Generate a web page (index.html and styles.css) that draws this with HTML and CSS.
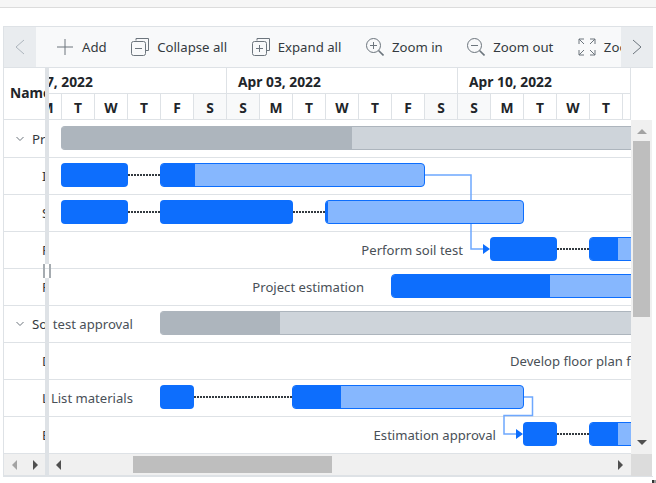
FILE: index.html
```html
<!DOCTYPE html>
<html>

<head>
    <meta charset="UTF-8">
    <meta name="viewport" content="width=device-width, initial-scale=1.0">
    <title>Gantt Chart</title>
    <link rel="stylesheet" href="styles.css">
</head>

<body>
    <div class="pageTop"></div>

    <div class="gantt">
        <div class="toolbar">
            <button class="navBtn">
                <svg width="12" height="16" viewBox="0 0 12 16"><path d="M10 1 2 8l8 7" class="navIcon" /></svg>
            </button>
            <div class="toolItems">
                <div class="toolItem">
                    <svg width="18" height="18" viewBox="0 0 18 18"><path d="M9 1v16M1 9h16" class="toolIcon" /></svg>
                    <span>Add</span>
                </div>
                <div class="toolItem">
                    <svg width="18" height="18" viewBox="0 0 18 18"><path d="M5 2.5V.5h12.5v12H15" class="toolIcon" /><rect x="0.5" y="3.5" width="14" height="14" rx="2" class="toolIcon" /><path d="M4 10.5h7" class="toolIcon" /></svg>
                    <span>Collapse all</span>
                </div>
                <div class="toolItem">
                    <svg width="18" height="18" viewBox="0 0 18 18"><path d="M5 2.5V.5h12.5v12H15" class="toolIcon" /><rect x="0.5" y="3.5" width="14" height="14" rx="2" class="toolIcon" /><path d="M4 10.5h7M7.5 7v7" class="toolIcon" /></svg>
                    <span>Expand all</span>
                </div>
                <div class="toolItem">
                    <svg width="18" height="18" viewBox="0 0 18 18"><circle cx="7.5" cy="7.5" r="7" class="toolIcon" /><path d="M4 7.5h7M7.5 4v7" class="toolIcon" /><path d="M12.5 12.5l5 5" class="toolHandle" /></svg>
                    <span>Zoom in</span>
                </div>
                <div class="toolItem">
                    <svg width="18" height="18" viewBox="0 0 18 18"><circle cx="7.5" cy="7.5" r="7" class="toolIcon" /><path d="M4 7.5h7" class="toolIcon" /><path d="M12.5 12.5l5 5" class="toolHandle" /></svg>
                    <span>Zoom out</span>
                </div>
                <div class="toolItem">
                    <svg width="18" height="18" viewBox="0 0 18 18"><path d="M1 6V1h5M12 1h5v5M17 12v5h-5M6 17H1v-5M1 1l5 5M17 1l-5 5M17 17l-5-5M1 17l5-5" class="toolIcon" /></svg>
                    <span>Zoom to fit</span>
                </div>
            </div>
            <button class="navBtn">
                <svg width="12" height="16" viewBox="0 0 12 16"><path d="M2 1l8 7-8 7" class="navIcon" /></svg>
            </button>
        </div>

        <div class="panes">
            <div class="gridPane">
                <div class="gridHead">Name</div>
                <div class="gridRow"><svg class="chevron" width="8" height="6" viewBox="0 0 8 6"><path d="M.5 1 4 4.5 7.500 1" /></svg><span>Project initiation</span></div>
                <div class="gridRow child">Identify site location</div>
                <div class="gridRow child">Soil survey</div>
                <div class="gridRow child">Perform soil test</div>
                <div class="gridRow child">Project estimation</div>
                <div class="gridRow"><svg class="chevron" width="8" height="6" viewBox="0 0 8 6"><path d="M.5 1 4 4.5 7.500 1" /></svg><span>Soil test approval</span></div>
                <div class="gridRow child">Develop floor plan for estimation</div>
                <div class="gridRow child">List materials</div>
                <div class="gridRow child">Estimation approval</div>
                <div class="hScroll gridScroll">
                    <span class="arrowLeft dim"></span>
                    <span class="arrowRight"></span>
                </div>
            </div>

            <div class="splitter"><div class="grip"></div></div>

            <div class="chartPane">
                <div class="timeline">
                    <div class="weeks">
                        <div class="week first">Mar 27, 2022</div>
                        <div class="week">Apr 03, 2022</div>
                        <div class="week">Apr 10, 2022</div>
                    </div>
                    <div class="days">
                        <div class="day partial">M</div>
                        <div class="day">T</div>
                        <div class="day">W</div>
                        <div class="day">T</div>
                        <div class="day">F</div>
                        <div class="day off">S</div>
                        <div class="day off">S</div>
                        <div class="day">M</div>
                        <div class="day">T</div>
                        <div class="day">W</div>
                        <div class="day">T</div>
                        <div class="day">F</div>
                        <div class="day off">S</div>
                        <div class="day off">S</div>
                        <div class="day">M</div>
                        <div class="day">T</div>
                        <div class="day">W</div>
                        <div class="day">T</div>
                        <div class="day cut"></div>
                    </div>
                </div>

                <div class="chartBody">
                    <div class="chartRow">
                        <div class="summary" style="left: 12px; width: 580px;"><div class="summaryDone" style="width: 291px;"></div></div>
                    </div>
                    <div class="chartRow">
                        <div class="bar" style="left: 12px; width: 67px;"></div>
                        <div class="dots" style="left: 79px; width: 32px;"></div>
                        <div class="bar light" style="left: 111px; width: 265px;"><div class="barDone" style="width: 34px;"></div></div>
                    </div>
                    <div class="chartRow">
                        <div class="bar" style="left: 12px; width: 67px;"></div>
                        <div class="dots" style="left: 79px; width: 32px;"></div>
                        <div class="bar" style="left: 111px; width: 133px;"></div>
                        <div class="dots" style="left: 244px; width: 32px;"></div>
                        <div class="bar light" style="left: 276px; width: 199px;"><div class="barDone" style="width: 2px;"></div></div>
                    </div>
                    <div class="chartRow">
                        <div class="label" style="right: 168px;">Perform soil test</div>
                        <div class="bar" style="left: 441px; width: 67px;"></div>
                        <div class="dots" style="left: 508px; width: 32px;"></div>
                        <div class="bar light" style="left: 540px; width: 100px;"><div class="barDone" style="width: 28px;"></div></div>
                    </div>
                    <div class="chartRow">
                        <div class="label" style="right: 267px;">Project estimation</div>
                        <div class="bar light" style="left: 342px; width: 300px;"><div class="barDone" style="width: 158px;"></div></div>
                    </div>
                    <div class="chartRow">
                        <div class="label" style="right: 498px;">Soil test approval</div>
                        <div class="summary" style="left: 111px; width: 481px;"><div class="summaryDone" style="width: 120px;"></div></div>
                    </div>
                    <div class="chartRow">
                        <div class="label" style="left: 461px;">Develop floor plan for estimation</div>
                    </div>
                    <div class="chartRow">
                        <div class="label" style="right: 498px;">List materials</div>
                        <div class="bar" style="left: 111px; width: 34px;"></div>
                        <div class="dots" style="left: 145px; width: 98px;"></div>
                        <div class="bar light" style="left: 243px; width: 232px;"><div class="barDone" style="width: 48px;"></div></div>
                    </div>
                    <div class="chartRow">
                        <div class="label" style="right: 135px;">Estimation approval</div>
                        <div class="bar" style="left: 474px; width: 34px;"></div>
                        <div class="dots" style="left: 508px; width: 32px;"></div>
                        <div class="bar light" style="left: 540px; width: 100px;"><div class="barDone" style="width: 28px;"></div></div>
                    </div>

                    <svg class="links" width="582" height="333" viewBox="0 0 582 333">
                        <path d="M376 54h46v74h13M475 276h8.500v18.500H455V313h13" class="linkLine" />
                        <path d="M434 123l7 5-7 5zM467 308l7 5-7 5z" class="linkHead" />
                    </svg>
                </div>

                <div class="hScroll chartScroll">
                    <span class="arrowLeft"></span>
                    <div class="track"><div class="thumb"></div></div>
                    <span class="arrowRight"></span>
                </div>
            </div>

            <div class="vScroll">
                <div class="headSpace"></div>
                <div class="vTrack">
                    <span class="arrowUp"></span>
                    <div class="vThumb"></div>
                    <span class="arrowDown"></span>
                </div>
                <div class="corner"></div>
            </div>
        </div>
    </div>

    <div class="resizeMark"></div>
</body>

</html>
```

FILE: styles.css
```css
* {
    box-sizing: border-box;
}

body {
    margin: 0;
    background-color: #fff;
    font-family: 'Noto Sans', sans-serif;
    font-size: 13px;
    color: #212529;
    overflow: hidden;
}

.pageTop {
    height: 8px;
    background-color: #f6f6f6;
    border-bottom: 1px solid #dcdcdc;
}

.gantt {
    width: 650px;
    margin: 18px 0 0 3px;
    border: 1px solid #dee2e6;
    border-right: none;
}

/* toolbar */
.toolbar {
    display: flex;
    height: 41px;
    background-color: #f8f9fa;
    border-bottom: 1px solid #dee2e6;
}

.navBtn {
    width: 32px;
    border: none;
    padding: 0;
    background-color: #e9ecef;
    display: flex;
    align-items: center;
    justify-content: center;
}

.navIcon {
    fill: none;
    stroke: #6c757d;
    stroke-width: 1;
}

.navBtn:first-child .navIcon {
    stroke: #adb5bd;
}

.toolItems {
    flex: 1;
    display: flex;
    align-items: center;
    gap: 24.5px;
    padding-left: 20px;
    overflow: hidden;
    white-space: nowrap;
    font-size: 13.2px;
}

.toolItem {
    display: flex;
    align-items: center;
    gap: 8px;
    color: #343a40;
}

.toolIcon {
    fill: none;
    stroke: #6c757d;
    stroke-width: 1;
}

.toolHandle {
    fill: none;
    stroke: #6c757d;
    stroke-width: 1.6;
}

/* panes */
.panes {
    display: flex;
}

.gridPane {
    width: 41px;
    overflow: hidden;
    white-space: nowrap;
    font-size: 13.3px;
}

.gridHead {
    height: 52px;
    margin-bottom: 1px;
    padding-left: 6px;
    line-height: 50px;
    font-size: 13.8px;
    font-weight: 700;
    border-bottom: 1px solid #dee2e6;
}

.gridRow {
    height: 37px;
    display: flex;
    align-items: center;
    padding-left: 12px;
    color: #343a40;
    border-bottom: 1px solid #dee2e6;
}

.gridRow.child {
    padding-left: 38px;
}

.chevron {
    flex: none;
    margin-right: 8px;
}

.chevron path {
    fill: none;
    stroke: #6c757d;
}

.splitter {
    position: relative;
    width: 4px;
    background-color: #dee2e6;
}

.grip {
    position: absolute;
    top: 196px;
    left: -2px;
    width: 8px;
    height: 14px;
    z-index: 3;
    background: linear-gradient(#fff 4px, #dee2e6 4px, #dee2e6 5px, #fff 5px);
    border-left: 2px solid #a5abb0;
    border-right: 2px solid #a5abb0;
}

.chartPane {
    width: 582px;
    overflow: hidden;
}

/* timeline header */
.timeline {
    height: 52px;
    margin-bottom: 1px;
    border-bottom: 1px solid #dee2e6;
    border-right: 1px solid #dee2e6;
    font-size: 13.8px;
    font-weight: 700;
    overflow: hidden;
    white-space: nowrap;
}

.weeks {
    display: flex;
    height: 26px;
    border-bottom: 1px solid #dee2e6;
}

.week {
    flex: none;
    width: 231px;
    padding-left: 11px;
    line-height: 27px;
    border-right: 1px solid #dee2e6;
}

.week.first {
    width: 178px;
    padding-left: 0;
    text-indent: -42px;
}

.days {
    display: flex;
    height: 25px;
}

.day {
    flex: none;
    width: 33px;
    text-align: center;
    line-height: 27px;
    border-right: 1px solid #dee2e6;
}

.day.partial {
    width: 13px;
    text-indent: -16px;
}

.day.off {
    background-color: #f8f9fa;
}

/* chart */
.chartBody {
    position: relative;
    height: 333px;
    overflow: hidden;
}

.chartRow {
    position: relative;
    height: 37px;
    border-bottom: 1px solid #dee2e6;
}

.bar,
.summary {
    position: absolute;
    top: 5px;
    height: 24px;
    border-radius: 4px;
    overflow: hidden;
    z-index: 2;
}

.bar {
    background-color: #0d6efd;
}

.bar.light {
    background-color: #86b7fe;
    border: 1px solid #0d6efd;
}

.barDone {
    height: 100%;
    background-color: #0d6efd;
}

.summary {
    background-color: #ced4da;
    border-top: 1px solid #adb5bd;
    border-bottom: 1px solid #adb5bd;
}

.summaryDone {
    height: 100%;
    background-color: #adb5bd;
}

.dots {
    position: absolute;
    top: 16px;
    height: 2px;
    background-image: linear-gradient(to right, #343a40 2px, transparent 2px);
    background-size: 3px 2px;
}

.label {
    position: absolute;
    top: 9px;
    font-size: 13.1px;
    color: #495057;
    white-space: nowrap;
}

.links {
    position: absolute;
    top: 0;
    left: 0;
    z-index: 1;
}

.linkLine {
    fill: none;
    stroke: #6ea8fe;
    stroke-width: 1.5;
}

.linkHead {
    fill: #0d6efd;
}

/* scrollbars */
.hScroll {
    height: 22px;
    display: flex;
    align-items: center;
    background-color: #f0f0f0;
    border-bottom: 1px solid #dee2e6;
}

.gridScroll {
    gap: 16px;
    padding-left: 8px;
}

.chartScroll {
    padding: 0 8px 0 7px;
    gap: 4px;
}

.track {
    flex: 1;
    height: 17px;
}

.thumb {
    width: 199px;
    height: 17px;
    margin-left: 68px;
    background-color: #bebebe;
}

.arrowLeft,
.arrowRight {
    flex: none;
    width: 0;
    height: 0;
    border-top: 5px solid transparent;
    border-bottom: 5px solid transparent;
}

.arrowLeft {
    border-right: 5px solid #505050;
}

.arrowLeft.dim {
    border-right-color: #a3a3a3;
}

.arrowRight {
    border-left: 5px solid #505050;
}

.vScroll {
    width: 21px;
    display: flex;
    flex-direction: column;
}

.headSpace {
    height: 52px;
}

.vTrack {
    height: 334px;
    background-color: #f0f0f0;
    display: flex;
    flex-direction: column;
    align-items: center;
    padding: 9px 0;
}

.arrowUp,
.arrowDown {
    flex: none;
    width: 0;
    height: 0;
    border-left: 5px solid transparent;
    border-right: 5px solid transparent;
}

.arrowUp {
    border-bottom: 5px solid #a3a3a3;
}

.arrowDown {
    border-top: 5px solid #505050;
}

.vThumb {
    width: 17px;
    height: 176px;
    margin-top: 7px;
    margin-bottom: auto;
    background-color: #bebebe;
}

.corner {
    height: 22px;
    background-color: #dcdcdc;
}

/* little mark in the window corner */
.resizeMark {
    position: absolute;
    top: 480px;
    left: 652px;
    width: 4px;
    height: 3px;
    background: linear-gradient(to right, #333 2px, #999 2px);
}
```
